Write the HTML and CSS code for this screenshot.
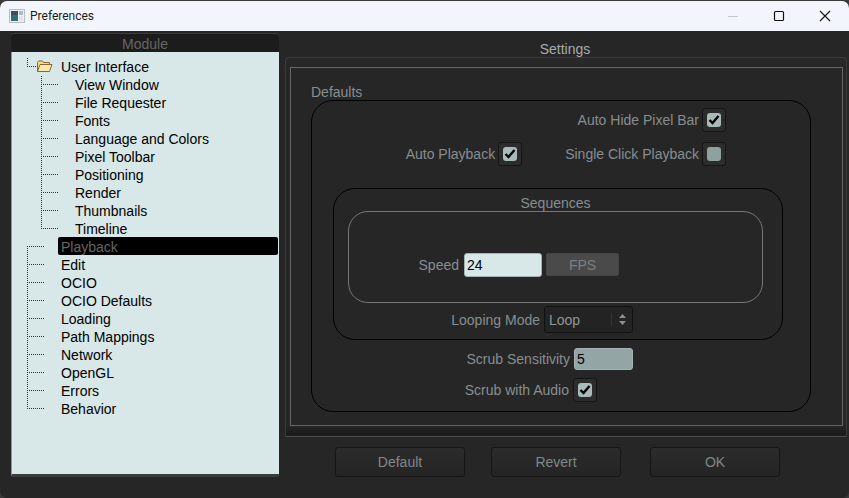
FILE: index.html
```html
<!DOCTYPE html>
<html lang="en">

<head>
    <meta charset="UTF-8">
    <title>Preferences</title>
    <link rel="stylesheet" href="styles.css">
</head>

<body>
    <div class="window">
        <!-- Title bar -->
        <div class="titlebar">
            <svg class="app-icon" width="16" height="14" viewBox="0 0 16 14">
                <rect x="0.5" y="0.5" width="15" height="13" fill="#eef0f2" stroke="#b9bdc2" />
                <rect x="2" y="2" width="7" height="10" fill="#2f6f78" />
                <rect x="2" y="2" width="7" height="4" fill="#3f4d5c" />
                <rect x="10" y="2" width="4" height="4" fill="#9fc0c8" />
                <rect x="10" y="7" width="4" height="5" fill="#dfe4e8" />
            </svg>
            <span class="app-title">Preferences</span>
            <div class="controls">
                <svg width="46" height="31" viewBox="0 0 46 31"><path d="M18 15.5h10" stroke="#c4c6c9" /></svg>
                <svg width="46" height="31" viewBox="0 0 46 31"><rect x="18.5" y="10.5" width="9" height="9" rx="1" fill="none" stroke="#111" stroke-width="1.2" /></svg>
                <svg width="46" height="31" viewBox="0 0 46 31"><path d="M18 10l10 10M28 10l-10 10" stroke="#111" stroke-width="1.1" /></svg>
            </div>
        </div>

        <div class="main">
            <!-- Module tree -->
            <div class="side">
                <div class="side-head">Module</div>
                <div class="tree">
                    <div class="row">
                        <span class="stem stem-first"></span>
                        <svg class="folder" width="17" height="14" viewBox="0 0 17 14">
                            <path d="M1.5 12.5V3.5l1-1.5h4l1 1.5h6v2" fill="#f5d88e" stroke="#8a6a2c" />
                            <path d="M1.5 12.5l2.5-7h12l-2.5 7z" fill="#fbe6ae" stroke="#8a6a2c" />
                        </svg>
                        <span class="name">User Interface</span>
                    </div>
                    <div class="row child"><span class="stem"></span><span class="name">View Window</span></div>
                    <div class="row child"><span class="stem"></span><span class="name">File Requester</span></div>
                    <div class="row child"><span class="stem"></span><span class="name">Fonts</span></div>
                    <div class="row child"><span class="stem"></span><span class="name">Language and Colors</span></div>
                    <div class="row child"><span class="stem"></span><span class="name">Pixel Toolbar</span></div>
                    <div class="row child"><span class="stem"></span><span class="name">Positioning</span></div>
                    <div class="row child"><span class="stem"></span><span class="name">Render</span></div>
                    <div class="row child"><span class="stem"></span><span class="name">Thumbnails</span></div>
                    <div class="row child"><span class="stem stem-last"></span><span class="name">Timeline</span></div>
                    <div class="row"><span class="stem stem-start"></span><span class="name selected">Playback</span></div>
                    <div class="row"><span class="stem"></span><span class="name">Edit</span></div>
                    <div class="row"><span class="stem"></span><span class="name">OCIO</span></div>
                    <div class="row"><span class="stem"></span><span class="name">OCIO Defaults</span></div>
                    <div class="row"><span class="stem"></span><span class="name">Loading</span></div>
                    <div class="row"><span class="stem"></span><span class="name">Path Mappings</span></div>
                    <div class="row"><span class="stem"></span><span class="name">Network</span></div>
                    <div class="row"><span class="stem"></span><span class="name">OpenGL</span></div>
                    <div class="row"><span class="stem"></span><span class="name">Errors</span></div>
                    <div class="row"><span class="stem stem-last"></span><span class="name">Behavior</span></div>
                </div>
            </div>

            <!-- Settings -->
            <div class="content">
                <div class="content-head">Settings</div>
                <div class="panel">
                    <div class="panel-inner">
                        <div class="group-label">Defaults</div>
                        <div class="group">
                            <div class="line line-hide">
                                <span>Auto Hide Pixel Bar</span>
                                <span class="check on"></span>
                            </div>
                            <div class="line line-play">
                                <span>Auto Playback</span>
                                <span class="check on"></span>
                                <span class="second">Single Click Playback</span>
                                <span class="check"></span>
                            </div>

                            <div class="seq">
                                <div class="seq-title">Sequences</div>
                                <div class="seq-box">
                                    <span>Speed</span>
                                    <input class="field speed" value="24">
                                    <button class="fps">FPS</button>
                                </div>
                                <div class="line line-loop">
                                    <span>Looping Mode</span>
                                    <div class="choice">
                                        <span class="choice-text">Loop</span>
                                        <svg width="9" height="13" viewBox="0 0 9 13"><path d="M4.5 1L8 5H1zM4.5 12L1 8h7z" fill="#8a8f90" /></svg>
                                    </div>
                                </div>
                            </div>

                            <div class="line line-scrub">
                                <span>Scrub Sensitivity</span>
                                <input class="field sens" value="5">
                            </div>
                            <div class="line line-audio">
                                <span>Scrub with Audio</span>
                                <span class="check on"></span>
                            </div>
                        </div>
                    </div>
                </div>
                <div class="footer">
                    <button class="btn">Default</button>
                    <button class="btn">Revert</button>
                    <button class="btn btn-ok">OK</button>
                </div>
            </div>
        </div>
    </div>
</body>

</html>
```

FILE: styles.css
```css
body {
    margin: 0;
    width: 849px;
    height: 498px;
    overflow: hidden;
    background: #3a3a3a;
    font-family: "Liberation Sans", Arial, sans-serif;
    font-size: 14px;
    color: #868e90;
}

.window {
    height: 497px;
    margin-top: 1px;
    display: flex;
    flex-direction: column;
    background: #262626;
    border-radius: 7px;
    overflow: hidden;
}

.titlebar {
    height: 30px;
    flex: none;
    display: flex;
    align-items: center;
    padding-left: 9px;
    background: #f2f5fb;
}

.app-title {
    margin-left: 5px;
    font-family: Roboto, sans-serif;
    font-size: 12px;
    color: #1a1a1a;
}

.controls {
    margin-left: auto;
    display: flex;
    padding-right: 1px;
}

.main {
    flex: 1;
    display: flex;
}

/* left column */
.side {
    width: 268px;
    margin: 2px 0 0 11px;
    flex: none;
}

.side-head {
    height: 19px;
    line-height: 22px;
    text-align: center;
    color: #666;
    background: #1c1c1c;
    border-radius: 3px 3px 0 0;
    box-shadow: inset 0 1px 0 #3c3c3c;
}

.tree {
    height: 416px;
    padding-top: 6px;
    background: #d8e7e7;
    border-left: 1px solid #8a9a9a;
    border-bottom: 3px solid #3a3d3d;
    border-radius: 0 0 2px 2px;
    color: #000;
}

.row {
    height: 18px;
    line-height: 18px;
    display: flex;
    align-items: center;
    padding-left: 15px;
}

.row.child {
    padding-left: 29px;
}

.stem {
    flex: none;
    width: 18px;
    height: 18px;
    margin-right: 16px;
    --stem-y: 0px;
    --stem-h: 18px;
    background:
        repeating-linear-gradient(90deg, #333 0 1px, transparent 1px 2px) 0 8px / 100% 1px no-repeat,
        repeating-linear-gradient(#333 0 1px, transparent 1px 2px) 0 var(--stem-y) / 1px var(--stem-h) no-repeat;
}

.stem-last {
    --stem-h: 9px;
}

.stem-start {
    --stem-y: 8px;
    --stem-h: 10px;
}

.stem-first {
    width: 9px;
    margin-right: 0;
    --stem-h: 9px;
}

.folder {
    flex: none;
    margin: -2px 8px 0 0;
}

.name.selected {
    flex: 1;
    align-self: flex-start;
    height: 18px;
    line-height: 20px;
    margin: -1px 1px 0 -3px;
    padding-left: 3px;
    background: #000;
    color: #666;
    border-radius: 2px;
}

/* right column */
.content {
    flex: 1;
    margin-left: 6px;
    min-width: 0;
}

.content-head {
    width: 560px;
    height: 26px;
    line-height: 36px;
    text-align: center;
    color: #a4abad;
}

.panel {
    width: 562px;
    height: 380px;
    box-sizing: border-box;
    padding: 9px 3px 0 4px;
    border: 1px solid #3b3b3b;
    border-bottom-color: #4a4a4a;
    border-radius: 4px 4px 0 0;
    background: linear-gradient(#2a2a2a 0, #262626 10px, #262626 368px, #1a1a1a 376px, #222 378px);
}

.panel-inner {
    height: 359px;
    box-sizing: border-box;
    padding: 16px 0 0 20px;
    border: 1px solid #666;
}

.group-label {
    height: 16px;
    line-height: 17px;
}

.group {
    width: 500px;
    height: 312px;
    box-sizing: border-box;
    padding-top: 7px;
    border: 1px solid #000;
    border-radius: 22px;
}

.line {
    display: flex;
    justify-content: flex-end;
    align-items: center;
    gap: 4px;
}

.line-hide {
    padding-right: 84px;
    margin-bottom: 10px;
    gap: 3px;
}

.line-play {
    padding-right: 84px;
    gap: 3px;
}

.second {
    margin-left: 40px;
}

.check {
    width: 24px;
    height: 24px;
    box-sizing: border-box;
    display: flex;
    align-items: center;
    justify-content: center;
    background: #2c2c2c;
    border: 1px solid #151515;
    border-radius: 3px;
}

.check::before {
    content: "";
    width: 14px;
    height: 14px;
    border-radius: 3px;
    background: #8fa0a0;
}

.check.on::before {
    background:
        url("data:image/svg+xml,%3Csvg xmlns='http://www.w3.org/2000/svg' width='14' height='14'%3E%3Cpath d='M2.5 7l3 3 6-7' fill='none' stroke='%23000' stroke-width='2.4'/%3E%3C/svg%3E") center no-repeat,
        #a9baba;
}

.seq {
    width: 450px;
    height: 152px;
    box-sizing: border-box;
    margin: 22px 0 8px 21px;
    border: 1px solid #000;
    border-radius: 22px;
}

.seq-title {
    height: 22px;
    line-height: 28px;
    text-align: center;
    margin-right: 5px;
}

.seq-box {
    width: 415px;
    height: 92px;
    box-sizing: border-box;
    margin-left: 14px;
    padding: 41px 143px 0 0;
    display: flex;
    justify-content: flex-end;
    align-items: flex-start;
    gap: 4px;
    border: 1px solid #777;
    border-radius: 20px;
}

.seq-box span {
    line-height: 24px;
    margin-right: 1px;
}

.field {
    box-sizing: border-box;
    padding: 0 0 0 2px;
    border: 1px solid #a3b3b3;
    border-radius: 3px;
    font: inherit;
    color: #000;
    outline: none;
}

.speed {
    width: 78px;
    height: 24px;
    background: #d8e7e7;
}

.sens {
    width: 59px;
    height: 22px;
    background: #93a5a5;
}

.fps {
    width: 73px;
    height: 23px;
    padding: 0;
    border: 1px solid #444;
    border-radius: 2px;
    background: #4a4a4a;
    color: #7b7f80;
    font: inherit;
}

.line-loop {
    padding: 3px 149px 0 0;
}

.choice {
    width: 89px;
    height: 27px;
    box-sizing: border-box;
    display: flex;
    align-items: center;
    padding-left: 4px;
    background: #232323;
    border: 1px solid #111;
    border-radius: 3px;
}

.choice-text {
    flex: 1;
    color: #8f9799;
}

.choice svg {
    flex: none;
    padding: 0 5px 0 6px;
    border-left: 1px solid #333;
}

.line-scrub {
    padding-right: 177px;
    margin-bottom: 8px;
}

.line-audio {
    padding-right: 213px;
}

.footer {
    display: flex;
    padding: 10px 0 0 50px;
    gap: 26px;
}

.btn {
    width: 130px;
    height: 30px;
    padding: 0;
    border: 1px solid #151515;
    border-radius: 3px;
    background: linear-gradient(#2c2c2c, #242424);
    color: #808789;
    font: inherit;
}

.btn-ok {
    margin-left: 3px;
}
```
